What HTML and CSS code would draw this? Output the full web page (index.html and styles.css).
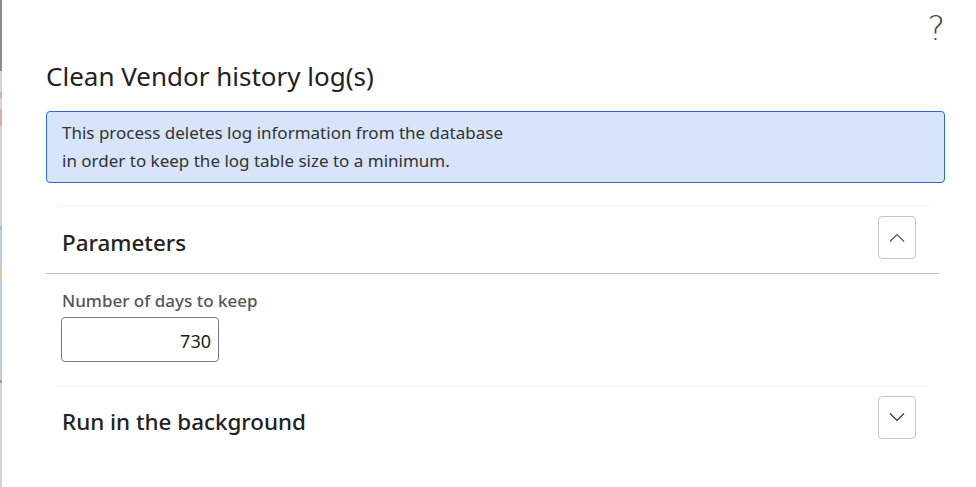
FILE: index.html
```html
<!DOCTYPE html>
<html>
<head>
    <title>Clean Vendor history log(s)</title>
    <link rel="stylesheet" href="styles.css">
</head>
<body>
    <div class="page-edge"></div>

    <div class="dialog">
        <div class="help-row">
            <button class="help-button" title="Help">?</button>
        </div>

        <h1 class="dialog-title">Clean Vendor history log(s)</h1>

        <div class="info-box">
            This process deletes log information from the database<br>
            in order to keep the log table size to a minimum.
        </div>

        <div class="fasttab expanded">
            <div class="fasttab-rule"></div>
            <div class="fasttab-header">
                <h2>Parameters</h2>
                <button class="toggle-button" title="Collapse">
                    <svg width="16" height="10" viewBox="0 0 16 10"><polyline points="1,8.5 8,1.5 15,8.5" fill="none" stroke="#555" stroke-width="1.2"/></svg>
                </button>
            </div>
            <div class="fasttab-body">
                <label class="field-label" for="daysToKeep">Number of days to keep</label>
                <input class="field-input" id="daysToKeep" type="text" value="730">
            </div>
        </div>

        <div class="fasttab">
            <div class="fasttab-rule"></div>
            <div class="fasttab-header">
                <h2>Run in the background</h2>
                <button class="toggle-button" title="Expand">
                    <svg width="16" height="10" viewBox="0 0 16 10"><polyline points="1,1.5 8,8.5 15,1.5" fill="none" stroke="#333" stroke-width="1.2"/></svg>
                </button>
            </div>
        </div>
    </div>
</body>
</html>
```

FILE: styles.css
```css
body{
    margin: 0;
    display: flex;
    height: 487px;
    overflow: hidden;
    font-family: "Noto Sans", "Open Sans", sans-serif;
    background-color: #fff;
    color: #222;
}
.page-edge{
    width: 2px;
    flex-shrink: 0;
    background: linear-gradient(to bottom,
        #8c8c8c 0, #8c8c8c 71px,
        #d4d4d4 71px, #d4d4d4 92px,
        #e6a9ad 92px, #e6a9ad 98px,
        #d4d4d4 98px, #d4d4d4 109px,
        #e6a9ad 109px, #e6a9ad 126px,
        #d4d4d4 126px, #d4d4d4 226px,
        #a9b8d4 226px, #a9b8d4 230px,
        #c6ccd8 230px, #c6ccd8 266px,
        #d8c8a8 266px, #d8c8a8 280px,
        #c6ccd8 280px, #c6ccd8 380px,
        #9a9a9a 380px, #9a9a9a 383px,
        #d4d4d4 383px);
}
.dialog{
    flex: 1;
    padding: 0 37px 0 44px;
}
.help-row{
    display: flex;
    justify-content: flex-end;
    height: 48px;
    margin-right: -6px;
}
.help-button{
    background: none;
    border: none;
    padding: 0;
    margin-top: 9px;
    height: 40px;
    font-family: "DejaVu Sans", sans-serif;
    font-weight: 200;
    font-size: 33px;
    line-height: 40px;
    color: #444;
    cursor: pointer;
}
.dialog-title{
    margin: 11px 0 0 0;
    font-size: 26px;
    font-weight: 400;
    line-height: 34px;
    color: #222;
}
.info-box{
    margin-top: 18px;
    margin-right: -6px;
    padding: 7px 15px 7px 15px;
    border: 1px solid #2b6bd3;
    border-radius: 4px;
    background-color: #d7e4fa;
    font-size: 17px;
    line-height: 28px;
    color: #333;
}
.fasttab-rule{
    height: 1px;
    margin: 0 9px 0 11px;
    background-color: #f2f2f2;
}
.info-box + .fasttab .fasttab-rule{
    margin-top: 23px;
}
.fasttab-header{
    display: flex;
    justify-content: space-between;
    align-items: center;
    height: 65px;
    padding: 0 23px 0 16px;
}
.expanded .fasttab-header{
    height: 66px;
    border-bottom: 1px solid #bdbdbd;
}
.fasttab-header h2{
    margin: 4px 0 0 0;
    font-size: 22.4px;
    font-weight: 500;
    color: #222;
}
.toggle-button{
    display: flex;
    align-items: center;
    justify-content: center;
    width: 38px;
    height: 43px;
    margin-bottom: 5px;
    padding: 0;
    background-color: #fff;
    border: 1px solid #c6c6c6;
    border-radius: 4px;
    cursor: pointer;
}
.fasttab-body{
    display: flex;
    flex-direction: column;
    align-items: flex-start;
    padding: 15px 16px 24px 15px;
}
.field-label{
    padding-left: 1px;
    font-size: 17px;
    font-weight: 500;
    line-height: 24px;
    color: #555;
}
.field-input{
    box-sizing: border-box;
    width: 158px;
    height: 45px;
    margin-top: 4px;
    padding: 2px 7px 0 7px;
    border: 1px solid #7a7a7a;
    border-radius: 4px;
    font-family: "Noto Sans", "Open Sans", sans-serif;
    font-size: 18px;
    text-align: right;
    color: #222;
}
```
